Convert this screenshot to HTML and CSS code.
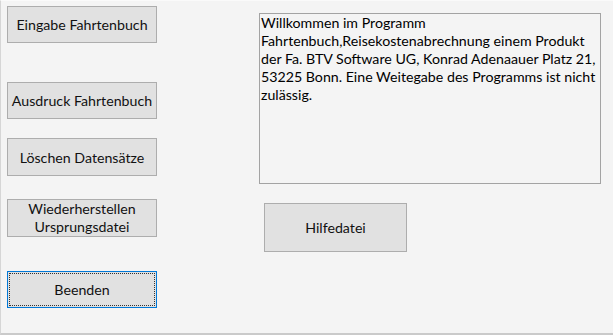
FILE: index.html
```html
<!DOCTYPE html>
<html lang="de">
<head>
<meta charset="utf-8">
<title>Fahrtenbuch</title>
<link rel="stylesheet" href="styles.css">
</head>
<body>
<div class="frame">
  <div class="left">
    <div class="btn b1">Eingabe Fahrtenbuch</div>
    <div class="btn b2">Ausdruck Fahrtenbuch</div>
    <div class="btn b3">Löschen Datensätze</div>
    <div class="btn b4 two">Wiederherstellen<br>Ursprungsdatei</div>
    <div class="btn b5 focus"><span class="focusring">Beenden</span></div>
  </div>
  <div class="right">
    <div class="textbox">Willkommen im Programm<br>Fahrtenbuch,Reisekostenabrechnung einem Produkt<br>der Fa. BTV Software UG, Konrad Adenaauer Platz 21,<br>53225 Bonn. Eine Weitegabe des Programms ist nicht<br>zulässig.</div>
    <div class="btn help">Hilfedatei</div>
  </div>
</div>
</body>
</html>
```
FILE: styles.css
```css
html, body {
  margin: 0;
  padding: 0;
  background: #f4f4f4;
}
.frame {
  width: 613px;
  height: 335px;
  box-sizing: border-box;
  border-left: 1px solid #d6d6d6;
  border-top: 1px solid #fafafa;
  border-bottom: 2px solid #cacaca;
  display: flex;
  font-family: Lato, "Open Sans", sans-serif;
  font-size: 14.2px;
  color: #111;
}
.left {
  display: flex;
  flex-direction: column;
  padding-left: 6px;
  padding-top: 5px;
  width: 150px;
}
.btn {
  box-sizing: border-box;
  background: #e1e1e1;
  border: 1px solid #adadad;
  display: flex;
  align-items: center;
  justify-content: center;
  text-align: center;
  width: 150px;
  height: 37px;
  overflow: hidden;
}
.b2 { margin-top: 39px; }
.b3 { margin-top: 19px; height: 38px; }
.b4 { margin-top: 23px; height: 38px; }
.two {
  align-items: flex-start;
  line-height: 18px;
  padding-top: 0;
}
.b5 { margin-top: 34px; }
.focus {
  border-color: #0078d7;
  padding: 1px;
}
.focusring {
  display: flex;
  align-items: center;
  justify-content: center;
  width: 100%;
  height: 100%;
  box-sizing: border-box;
  border: 1px dotted #333;
}
.right {
  margin-left: 102px;
  padding-top: 12px;
  display: flex;
  flex-direction: column;
}
.textbox {
  box-sizing: border-box;
  width: 342px;
  height: 171px;
  border: 1px solid #a3a3a3;
  background: #f4f4f4;
  padding: 0 1px;
  line-height: 18px;
  color: #000;
  white-space: nowrap;
  overflow: hidden;
}
.help {
  margin-top: 19px;
  margin-left: 5px;
  width: 143px;
  height: 49px;
}
```
